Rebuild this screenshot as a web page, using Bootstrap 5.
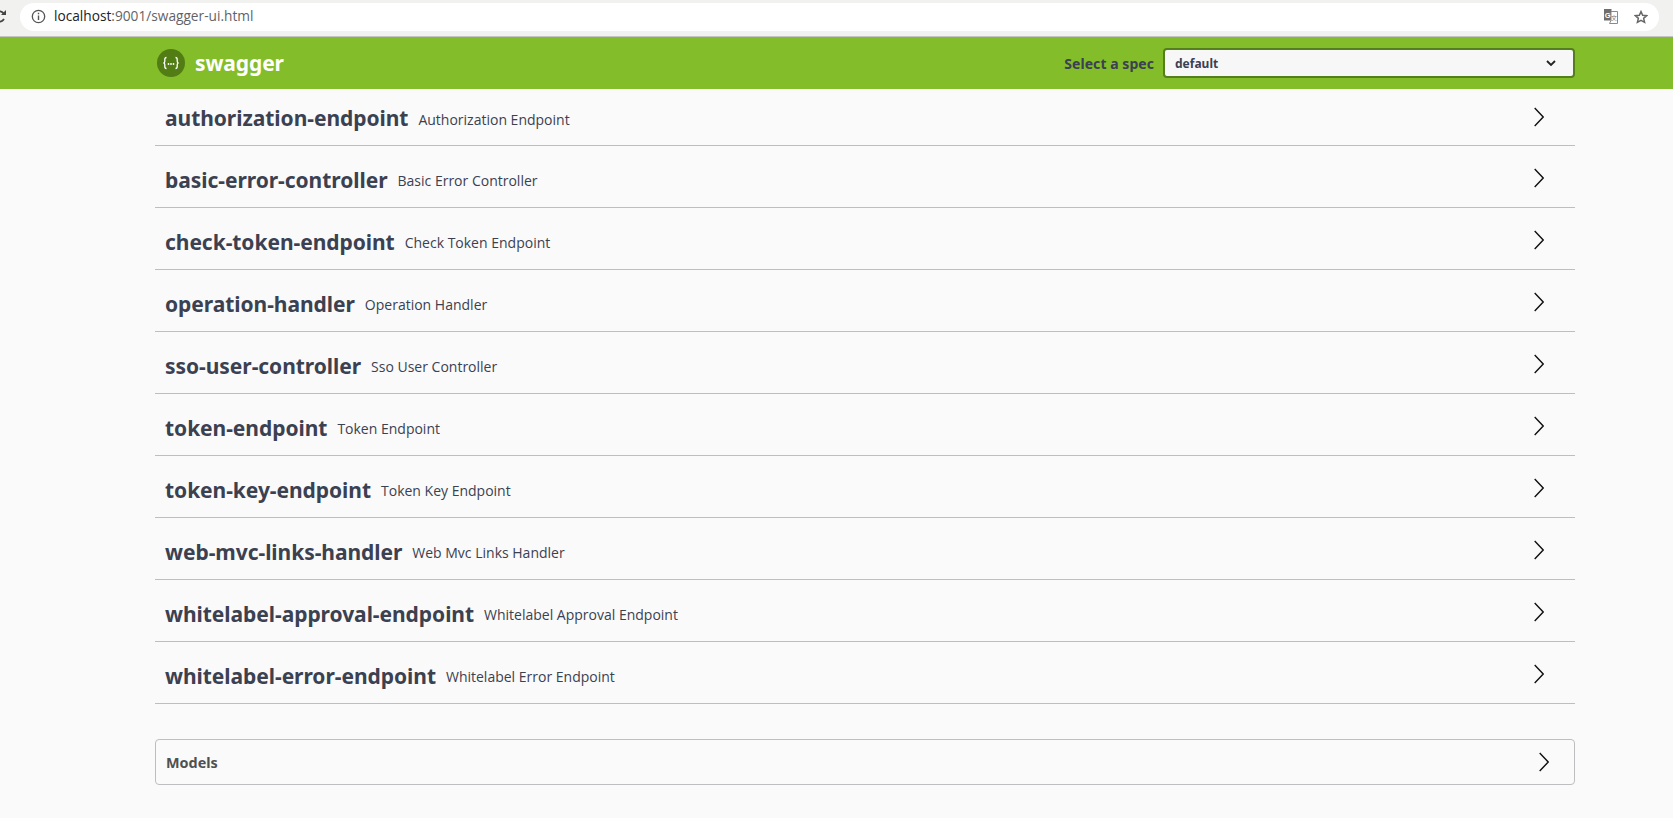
<!DOCTYPE html>
<html><head><meta charset="utf-8">
<link href="https://cdn.jsdelivr.net/npm/bootstrap@5.3.0/dist/css/bootstrap.min.css" rel="stylesheet">
<style>
body{background:#fafafa;font-family:"Open Sans",sans-serif;color:#3b4151;overflow:hidden}
.chrome-bar{height:37px;background:#f1f1f0;border-bottom:1px solid #c4c4c4;padding-top:3px}
.reload-ic{width:20px;flex:none;overflow:hidden}
.url-pill{background:#fff;border-radius:14px;height:28px;width:1639px;padding:0 11px 1px 11px;font-family:"Open Sans",sans-serif;font-size:13.7px;color:#5f6368}
.url-pill b{font-weight:400;color:#202124}
.swag-top{background:#84bd2a;height:52px}
.swag-wrap{margin-left:155px;width:1420px}
.logo-wrap{padding-left:2px;gap:10px}
.swag-name{font-family:"Noto Sans",sans-serif;font-weight:700;font-size:21px;letter-spacing:-.1px;color:#fff;line-height:1}
.spec-group{gap:9px}
.spec-label{font-family:"Noto Sans",sans-serif;font-weight:700;font-size:14px;letter-spacing:.05px;color:#3b4151}
.spec-box.form-select{width:412px;height:30px;border:2px solid #547f1c;border-radius:4px;background-color:#f7f7f7;background-image:url("data:image/svg+xml,%3csvg xmlns='http://www.w3.org/2000/svg' viewBox='0 0 10 7'%3e%3cpath fill='none' stroke='%23222' stroke-width='1.800' d='M1 1l4 4 4-4'/%3e%3c/svg%3e");background-size:10px 7px;background-position:right 17px center;font-family:"Noto Sans",sans-serif;font-weight:700;font-size:12px;padding:1px 30px 0 10px;color:#3b4151;box-shadow:none}
.tag-row{height:62px;border-bottom:1px solid #bebec0;padding:8px 31px 0 10px;color:#3b4151}
.tag-row svg{margin-bottom:6px}
.tag-row:first-child{height:57px;padding-top:4px}
.tag-row:first-child svg{margin-bottom:4px}
.tag-name{font-family:"Noto Sans",sans-serif;font-weight:700;font-size:21px;letter-spacing:-.05px;margin-right:10px}
.tag-desc{font-size:14px}
.models-box{height:46px;margin-top:35px;border:1px solid #bebec0;border-radius:4px;padding:0 25px 0 10px;font-family:"Noto Sans",sans-serif;font-weight:700;font-size:14.400px;color:#505050}
.models-box span{padding-top:1px}
</style></head>
<body>
<div class="chrome-bar d-flex align-items-start">
<div class="reload-ic"><svg class="d-block mt-1" width="20" height="20" viewBox="0 0 20 20" fill="none" stroke="#444" stroke-width="1.8"><path d="M-4 5a6 6 0 0 1 8 2M4 12a6 6 0 0 1-8 2"/><path d="M1 8h5V3z" fill="#444" stroke="none"/></svg></div>
<div class="url-pill d-flex align-items-center gap-2">
<svg width="15" height="15" viewBox="0 0 16 16" fill="none" stroke="#555"><circle cx="8" cy="8" r="6.6" stroke-width="1.4"/><path d="M8 7v4.700M8 4v1.600" stroke-width="1.5"/></svg>
<span class="flex-grow-1"><b>localhost</b>:9001/swagger-ui.html</span>
<div class="d-flex align-items-center gap-3">
<svg width="14" height="15" viewBox="0 0 14 15"><path d="M0 0h7.500v11.500H0z" fill="#6e6e6e"/><path d="M7 2.500h6.500v12H5.500L7 11.500z" fill="#fff" stroke="#8a8a8a"/><text x="3.700" y="8.500" text-anchor="middle" font-size="7.500" font-weight="700" font-family="Liberation Sans" fill="#fff">G</text><text x="10" y="11" text-anchor="middle" font-size="6" font-family="Noto Sans CJK SC" fill="#777">文</text></svg>
<svg width="14" height="14" viewBox="0 0 16 16" fill="none" stroke="#666" stroke-width="1.700"><path d="M8 1.800l1.900 4.300 4.600.4-3.500 3 1.100 4.600L8 11.700l-4.100 2.400L5 9.500l-3.500-3 4.600-.4z"/></svg>
</div>
</div></div>
<div class="swag-top"><div class="swag-wrap h-100 d-flex align-items-center justify-content-between">
<div class="logo-wrap d-flex align-items-center">
<svg width="28" height="28" viewBox="0 0 28 28"><circle cx="14" cy="14" r="14" fill="#517d14"/><g fill="none" stroke="#fff" stroke-width="1.300"><path d="M9.500 8.500c-1.500 0-1.700.8-1.700 2v1.800c0 1-.6 1.600-1.300 1.700.7.100 1.300.7 1.300 1.700v1.800c0 1.200.2 2 1.700 2"/><path d="M18.500 8.500c1.500 0 1.700.8 1.700 2v1.800c0 1 .6 1.600 1.300 1.700-.7.100-1.300.7-1.300 1.700v1.800c0 1.200-.2 2-1.700 2"/></g><g fill="#fff"><circle cx="11.500" cy="15" r=".9"/><circle cx="14" cy="15" r=".9"/><circle cx="16.500" cy="15" r=".9"/></g></svg>
<span class="swag-name">swagger</span></div>
<div class="spec-group d-flex align-items-center"><span class="spec-label">Select a spec</span>
<select class="spec-box form-select"><option>default</option></select></div>
</div></div>
<main class="swag-wrap">
<section>
<div class="tag-row d-flex align-items-center"><span class="tag-name">authorization-endpoint</span><span class="tag-desc flex-grow-1">Authorization Endpoint</span><svg width="10" height="20" viewBox="0 0 10 20" fill="none" stroke="#111" stroke-width="1.400"><path d="M.7 1l8.500 9-8.500 9"/></svg></div>
<div class="tag-row d-flex align-items-center"><span class="tag-name">basic-error-controller</span><span class="tag-desc flex-grow-1">Basic Error Controller</span><svg width="10" height="20" viewBox="0 0 10 20" fill="none" stroke="#111" stroke-width="1.400"><path d="M.7 1l8.500 9-8.500 9"/></svg></div>
<div class="tag-row d-flex align-items-center"><span class="tag-name">check-token-endpoint</span><span class="tag-desc flex-grow-1">Check Token Endpoint</span><svg width="10" height="20" viewBox="0 0 10 20" fill="none" stroke="#111" stroke-width="1.400"><path d="M.7 1l8.500 9-8.500 9"/></svg></div>
<div class="tag-row d-flex align-items-center"><span class="tag-name">operation-handler</span><span class="tag-desc flex-grow-1">Operation Handler</span><svg width="10" height="20" viewBox="0 0 10 20" fill="none" stroke="#111" stroke-width="1.400"><path d="M.7 1l8.500 9-8.500 9"/></svg></div>
<div class="tag-row d-flex align-items-center"><span class="tag-name">sso-user-controller</span><span class="tag-desc flex-grow-1">Sso User Controller</span><svg width="10" height="20" viewBox="0 0 10 20" fill="none" stroke="#111" stroke-width="1.400"><path d="M.7 1l8.500 9-8.500 9"/></svg></div>
<div class="tag-row d-flex align-items-center"><span class="tag-name">token-endpoint</span><span class="tag-desc flex-grow-1">Token Endpoint</span><svg width="10" height="20" viewBox="0 0 10 20" fill="none" stroke="#111" stroke-width="1.400"><path d="M.7 1l8.500 9-8.500 9"/></svg></div>
<div class="tag-row d-flex align-items-center"><span class="tag-name">token-key-endpoint</span><span class="tag-desc flex-grow-1">Token Key Endpoint</span><svg width="10" height="20" viewBox="0 0 10 20" fill="none" stroke="#111" stroke-width="1.400"><path d="M.7 1l8.500 9-8.500 9"/></svg></div>
<div class="tag-row d-flex align-items-center"><span class="tag-name">web-mvc-links-handler</span><span class="tag-desc flex-grow-1">Web Mvc Links Handler</span><svg width="10" height="20" viewBox="0 0 10 20" fill="none" stroke="#111" stroke-width="1.400"><path d="M.7 1l8.500 9-8.500 9"/></svg></div>
<div class="tag-row d-flex align-items-center"><span class="tag-name">whitelabel-approval-endpoint</span><span class="tag-desc flex-grow-1">Whitelabel Approval Endpoint</span><svg width="10" height="20" viewBox="0 0 10 20" fill="none" stroke="#111" stroke-width="1.400"><path d="M.7 1l8.500 9-8.500 9"/></svg></div>
<div class="tag-row d-flex align-items-center"><span class="tag-name">whitelabel-error-endpoint</span><span class="tag-desc flex-grow-1">Whitelabel Error Endpoint</span><svg width="10" height="20" viewBox="0 0 10 20" fill="none" stroke="#111" stroke-width="1.400"><path d="M.7 1l8.500 9-8.500 9"/></svg></div>
</section>
<div class="models-box d-flex align-items-center justify-content-between"><span>Models</span><svg width="10" height="20" viewBox="0 0 10 20" fill="none" stroke="#111" stroke-width="1.400"><path d="M.7 1l8.500 9-8.500 9"/></svg></div>
</main>
</body></html>
